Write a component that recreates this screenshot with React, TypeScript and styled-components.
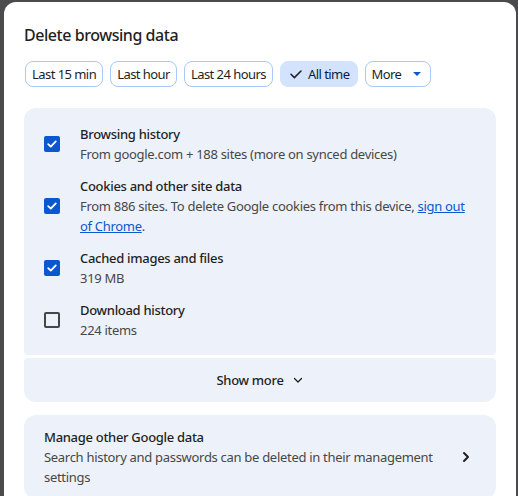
import React from "react";
import styled, { createGlobalStyle, css } from "styled-components";

const Global = createGlobalStyle`
  html, body { margin: 0; padding: 0; }
  body {
    background: #4b4b4d;
    font-family: "Noto Sans", "Open Sans", sans-serif;
    letter-spacing: -0.3px;
    height: 496px;
    overflow: hidden;
  }
`;

const Backdrop = styled.div`
  height: 496px;
  padding: 2px 2px 0 4px;
  box-sizing: border-box;
  display: flex;
`;

const Dialog = styled.div`
  flex: 1;
  background: #ffffff;
  border-radius: 12px 12px 0 0;
  padding: 21px 20px 0 20px;
  display: flex;
  flex-direction: column;
  overflow: hidden;
`;

const Title = styled.h1`
  margin: 0;
  font-size: 16px;
  line-height: 24px;
  font-weight: 500;
  letter-spacing: -0.45px;
  color: #1f1f1f;
`;

const ChipRow = styled.div`
  display: flex;
  gap: 7px;
  margin-top: 14px;
  margin-left: 1px;
`;

const Chip = styled.button<{ $selected?: boolean }>`
  height: 26px;
  box-sizing: border-box;
  padding: 0 6px;
  border-radius: 8px;
  border: 1px solid #a8c7fa;
  background: #ffffff;
  color: #1f1f1f;
  font-family: inherit;
  letter-spacing: -0.55px;
  font-size: 13px;
  display: flex;
  align-items: center;
  gap: 5px;
  cursor: pointer;
  ${(p) =>
    p.$selected &&
    css`
      background: #d3e3fd;
      border-color: #d3e3fd;
      color: #041e49;
      padding: 0 7px 0 8px;
    `}
`;

const Caret = styled.span`
  width: 0;
  height: 0;
  border-left: 4px solid transparent;
  border-right: 4px solid transparent;
  border-top: 4px solid #0b57d0;
  margin-left: 7px;
  margin-right: 3px;
`;

const Sections = styled.div`
  display: flex;
  flex-direction: column;
  gap: 3px;
  margin-top: 21px;
`;

const ItemsCard = styled.div`
  background: #edf2fa;
  border-radius: 12px 12px 4px 4px;
  padding: 16px 20px 15px 20px;
  display: flex;
  flex-direction: column;
  gap: 12px;
`;

const Item = styled.label`
  display: grid;
  grid-template-columns: 16px 1fr;
  column-gap: 20px;
  align-items: center;
`;

const Box = styled.span<{ $checked: boolean }>`
  width: 16px;
  height: 16px;
  box-sizing: border-box;
  border-radius: 2px;
  display: flex;
  align-items: center;
  justify-content: center;
  ${(p) =>
    p.$checked
      ? css`
          background: #0b57d0;
        `
      : css`
          border: 2px solid #444746;
        `}
`;

const ItemText = styled.div`
  display: flex;
  flex-direction: column;
`;

const ItemTitle = styled.div`
  font-size: 13px;
  line-height: 20px;
  font-weight: 500;
  color: #1f1f1f;
`;

const ItemSub = styled.div`
  font-size: 13px;
  line-height: 20px;
  color: #474747;
`;

const Link = styled.a`
  color: #0b57d0;
  text-decoration: underline;
`;

const ShowMore = styled.div`
  background: #edf2fa;
  border-radius: 4px 4px 12px 12px;
  height: 44px;
  display: flex;
  align-items: center;
  justify-content: center;
  gap: 8px;
  font-size: 13px;
  color: #1f1f1f;
  font-weight: 500;
`;

const ManageCard = styled.div`
  margin-top: 13px;
  background: #edf2fa;
  border-radius: 12px;
  padding: 12px 20px 12px 20px;
  display: grid;
  grid-template-columns: 1fr 20px;
  column-gap: 14px;
  align-items: center;
`;

const Check = () => (
  <svg width="12" height="12" viewBox="0 0 12 12" fill="none">
    <path d="M2.2 6.2 L4.8 8.6 L9.8 3.4" stroke="#fff" strokeWidth="1.8" strokeLinecap="round" strokeLinejoin="round" />
  </svg>
);

const Tick = () => (
  <svg width="14" height="14" viewBox="0 0 14 14" fill="none">
    <path d="M2 7.3 L5.4 10.6 L12 4" stroke="#1f1f1f" strokeWidth="1.5" strokeLinecap="round" strokeLinejoin="round" />
  </svg>
);

const ChevronDown = () => (
  <svg width="12" height="12" viewBox="0 0 12 12" fill="none">
    <path d="M2.5 4.5 L6 8 L9.5 4.5" stroke="#1f1f1f" strokeWidth="1.3" strokeLinecap="round" strokeLinejoin="round" />
  </svg>
);

const ChevronRight = () => (
  <svg width="20" height="20" viewBox="0 0 20 20" fill="none">
    <path d="M8 6 L12 10 L8 14" stroke="#1f1f1f" strokeWidth="2" strokeLinecap="round" strokeLinejoin="round" />
  </svg>
);

type Row = { title: string; sub: React.ReactNode; checked: boolean };

const rows: Row[] = [
  { title: "Browsing history", sub: "From google.com + 188 sites (more on synced devices)", checked: true },
  {
    title: "Cookies and other site data",
    sub: (
      <>
        From 886 sites. To delete Google cookies from this device, <Link href="#">sign out of Chrome</Link>.
      </>
    ),
    checked: true,
  },
  { title: "Cached images and files", sub: "319 MB", checked: true },
  { title: "Download history", sub: "224 items", checked: false },
];

export default function App() {
  return (
    <>
      <Global />
      <Backdrop>
        <Dialog>
          <Title>Delete browsing data</Title>
          <ChipRow>
            <Chip>Last 15 min</Chip>
            <Chip>Last hour</Chip>
            <Chip>Last 24 hours</Chip>
            <Chip $selected>
              <Tick />
              All time
            </Chip>
            <Chip>
              More
              <Caret />
            </Chip>
          </ChipRow>
          <Sections>
            <ItemsCard>
              {rows.map((r) => (
                <Item key={r.title}>
                  <Box $checked={r.checked}>{r.checked && <Check />}</Box>
                  <ItemText>
                    <ItemTitle>{r.title}</ItemTitle>
                    <ItemSub>{r.sub}</ItemSub>
                  </ItemText>
                </Item>
              ))}
            </ItemsCard>
            <ShowMore>
              Show more
              <ChevronDown />
            </ShowMore>
          </Sections>
          <ManageCard>
            <ItemText>
              <ItemTitle>Manage other Google data</ItemTitle>
              <ItemSub>Search history and passwords can be deleted in their management settings</ItemSub>
            </ItemText>
            <ChevronRight />
          </ManageCard>
        </Dialog>
      </Backdrop>
    </>
  );
}
